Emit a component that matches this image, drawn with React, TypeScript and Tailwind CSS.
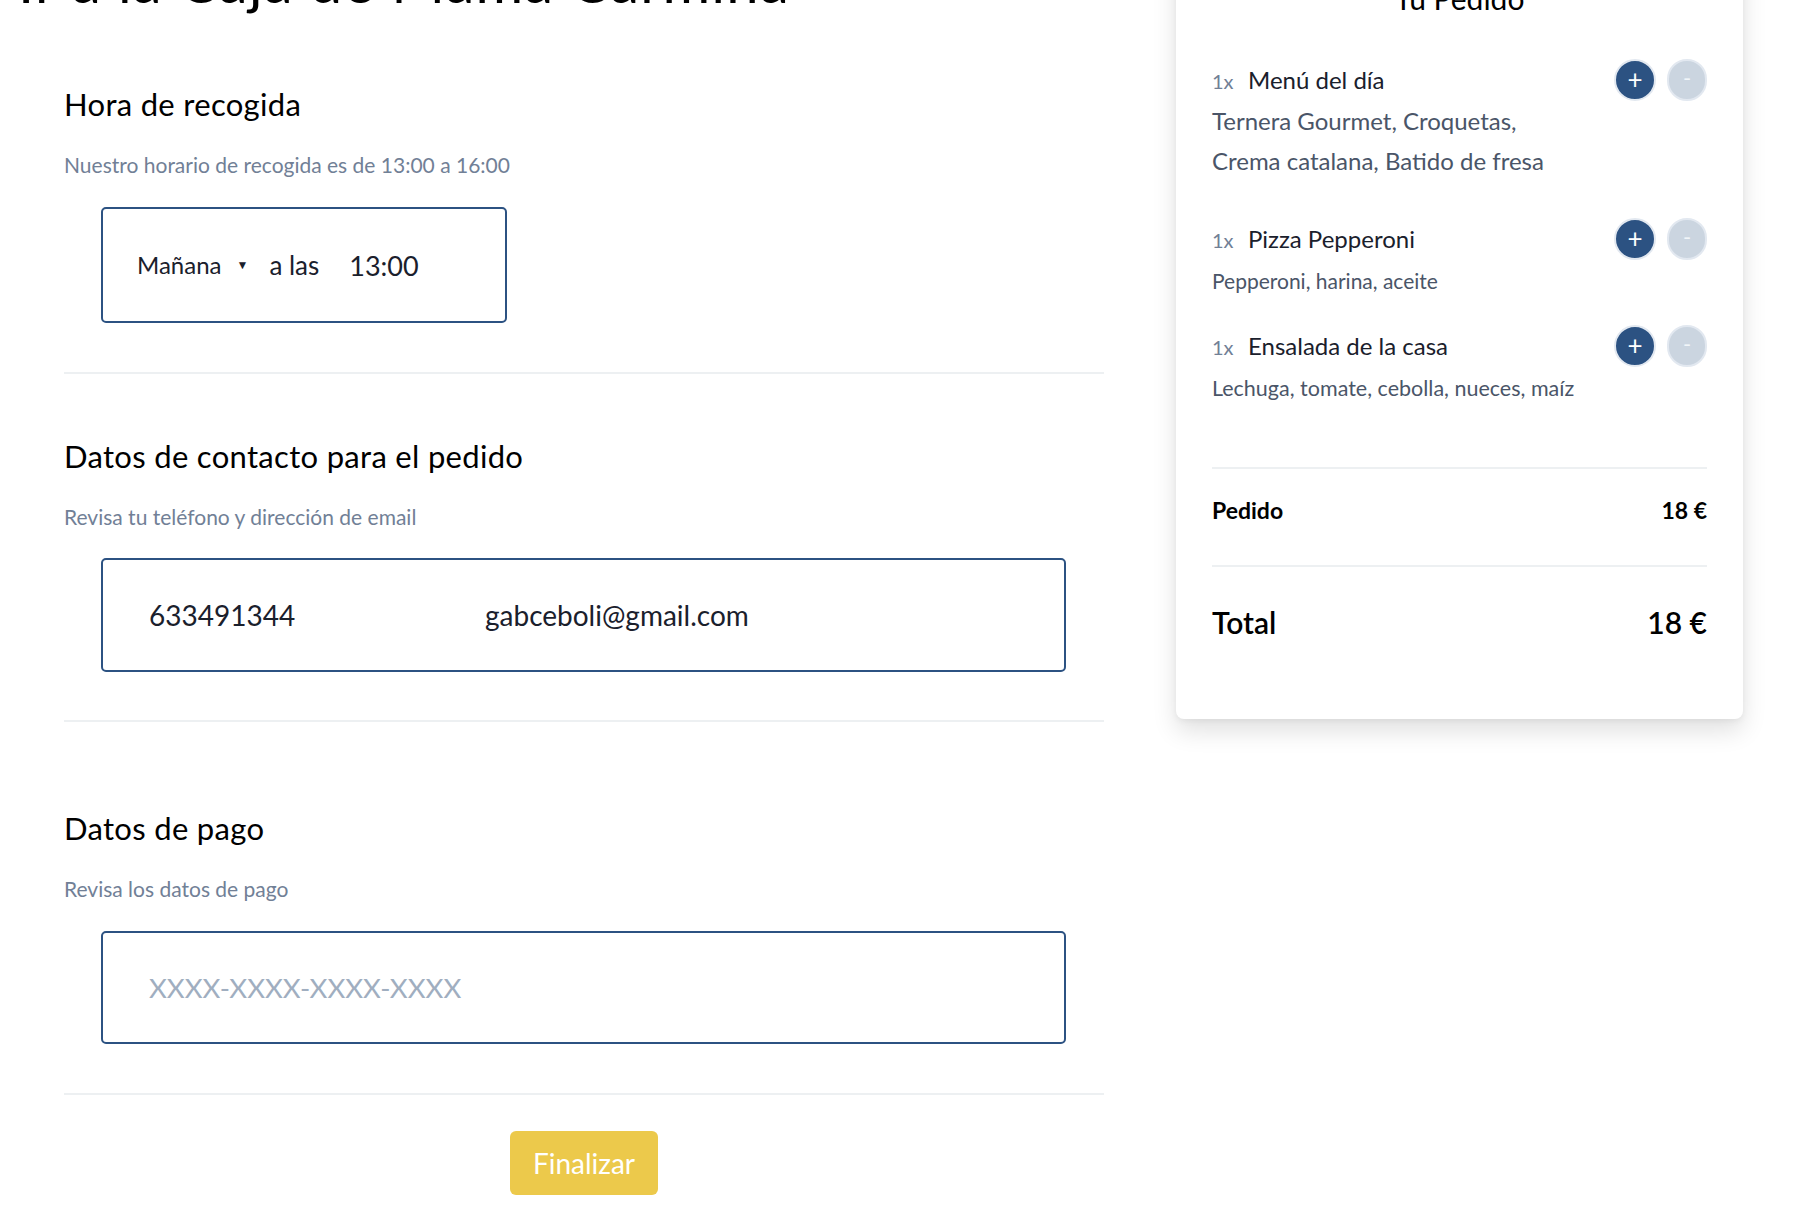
import React from "react";

function QtyButtons() {
  return (
    <div className="flex items-center gap-[11px]">
      <button className="w-[42px] h-[42px] rounded-full bg-[#2c5282] border-2 border-[#e2e8f0] text-white text-[26px] leading-none flex items-center justify-center pb-[3px]">
        +
      </button>
      <button className="w-[40px] h-[42px] rounded-full bg-[#cbd5e0] border-2 border-[#e2e8f0] text-[#f1f5f9] text-[22px] leading-none flex items-center justify-center pb-[4px]">
        -
      </button>
    </div>
  );
}

function ItemRow({ name }: { name: string }) {
  return (
    <div className="flex items-center justify-between h-[42px]">
      <div className="flex items-baseline">
        <span className="text-[20px] text-[#718096] w-[36px]">1x</span>
        <span className="text-[24px] leading-[30px] text-[#1a202c]">{name}</span>
      </div>
      <QtyButtons />
    </div>
  );
}

export default function App() {
  return (
    <div className="w-full h-[1228px] overflow-hidden bg-white font-['Lato',_sans-serif] text-[#1a202c]">
      <div className="-mt-[80px] flex items-start">
        {/* Left column */}
        <div className="w-[1104px] shrink-0">
          <h1 className="mt-[31px] ml-[18px] text-[58px] leading-[60px] text-black whitespace-nowrap tracking-[0.02em]">
            Ir a la Caja de Mamá Carmina
          </h1>
          <div className="ml-[64px] w-[1040px]">
            {/* Section 1 */}
            <h2 className="mt-[75px] text-[31px] leading-[36px] text-black tracking-[0.01em]">Hora de recogida</h2>
            <p className="mt-[29px] text-[21px] leading-[28px] text-[#718096]">
              Nuestro horario de recogida es de 13:00 a 16:00
            </p>
            <div className="mt-[28px] ml-[37px] w-[406px] h-[116px] border-2 border-[#2c5282] rounded-[5px] flex items-center pl-[34px]">
              <span className="text-[24px] leading-none">Mañana</span>
              <span className="ml-[15px] text-[12px] leading-none">▼</span>
              <span className="ml-[21px] text-[26px] leading-none">a las</span>
              <span className="ml-[30px] text-[27px] leading-none">13:00</span>
            </div>
            <div className="mt-[49px] h-[2px] bg-[#edf0f2]" />

            {/* Section 2 */}
            <h2 className="mt-[64px] text-[31px] leading-[36px] text-black tracking-[0.01em]">
              Datos de contacto para el pedido
            </h2>
            <p className="mt-[29px] text-[21px] leading-[28px] text-[#718096]">
              Revisa tu teléfono y dirección de email
            </p>
            <div className="mt-[27px] ml-[37px] mr-[38px] h-[114px] border-2 border-[#2c5282] rounded-[5px] flex items-center pl-[46px]">
              <span className="w-[336px] text-[28px] leading-none">633491344</span>
              <span className="text-[28px] leading-none">gabceboli@gmail.com</span>
            </div>
            <div className="mt-[48px] h-[2px] bg-[#edf0f2]" />

            {/* Section 3 */}
            <h2 className="mt-[88px] text-[31px] leading-[36px] text-black tracking-[0.01em]">Datos de pago</h2>
            <p className="mt-[29px] text-[21px] leading-[28px] text-[#718096]">Revisa los datos de pago</p>
            <div className="mt-[28px] ml-[37px] mr-[38px] h-[113px] border-2 border-[#2c5282] rounded-[5px] flex items-center pl-[46px]">
              <span className="text-[27.5px] leading-none text-[#a0aec0]">XXXX-XXXX-XXXX-XXXX</span>
            </div>
            <div className="mt-[49px] h-[2px] bg-[#edf0f2]" />

            <div className="mt-[36px] flex justify-center">
              <button className="w-[148px] h-[64px] rounded-[6px] bg-[#ecc94b] text-white text-[28px] leading-none">
                Finalizar
              </button>
            </div>
          </div>
        </div>

        {/* Right card */}
        <div className="ml-[72px] w-[567px] shrink-0 bg-white rounded-b-[8px] shadow-[0_12px_24px_rgba(0,0,0,0.12),0_2px_6px_rgba(0,0,0,0.05)] pt-[60px] pl-[36px] pr-[36px] pb-[77px]">
          <h3 className="text-[30px] leading-[36px] text-center text-black">Tu Pedido</h3>

          <div className="mt-[43px]">
            <ItemRow name="Menú del día" />
            <p className="text-[24px] leading-[40px] text-[#4a5568]">
              Ternera Gourmet, Croquetas,
              <br />
              Crema catalana, Batido de fresa
            </p>
          </div>

          <div className="mt-[37px]">
            <ItemRow name="Pizza Pepperoni" />
            <p className="mt-[6px] text-[21px] leading-[30px] text-[#4a5568]">Pepperoni, harina, aceite</p>
          </div>

          <div className="mt-[29px]">
            <ItemRow name="Ensalada de la casa" />
            <p className="mt-[6px] text-[21.5px] leading-[30px] text-[#4a5568]">
              Lechuga, tomate, cebolla, nueces, maíz
            </p>
          </div>

          <div className="mt-[64px] h-[2px] bg-[#edf0f2]" />
          <div className="mt-[25px] flex justify-between items-center h-[32px] text-[23px] font-bold text-black">
            <span>Pedido</span>
            <span>18 €</span>
          </div>
          <div className="mt-[39px] h-[2px] bg-[#edf0f2]" />
          <div className="mt-[35px] flex justify-between items-center h-[40px] text-[30px] font-semibold text-black">
            <span>Total</span>
            <span>18 €</span>
          </div>
        </div>
      </div>
    </div>
  );
}
